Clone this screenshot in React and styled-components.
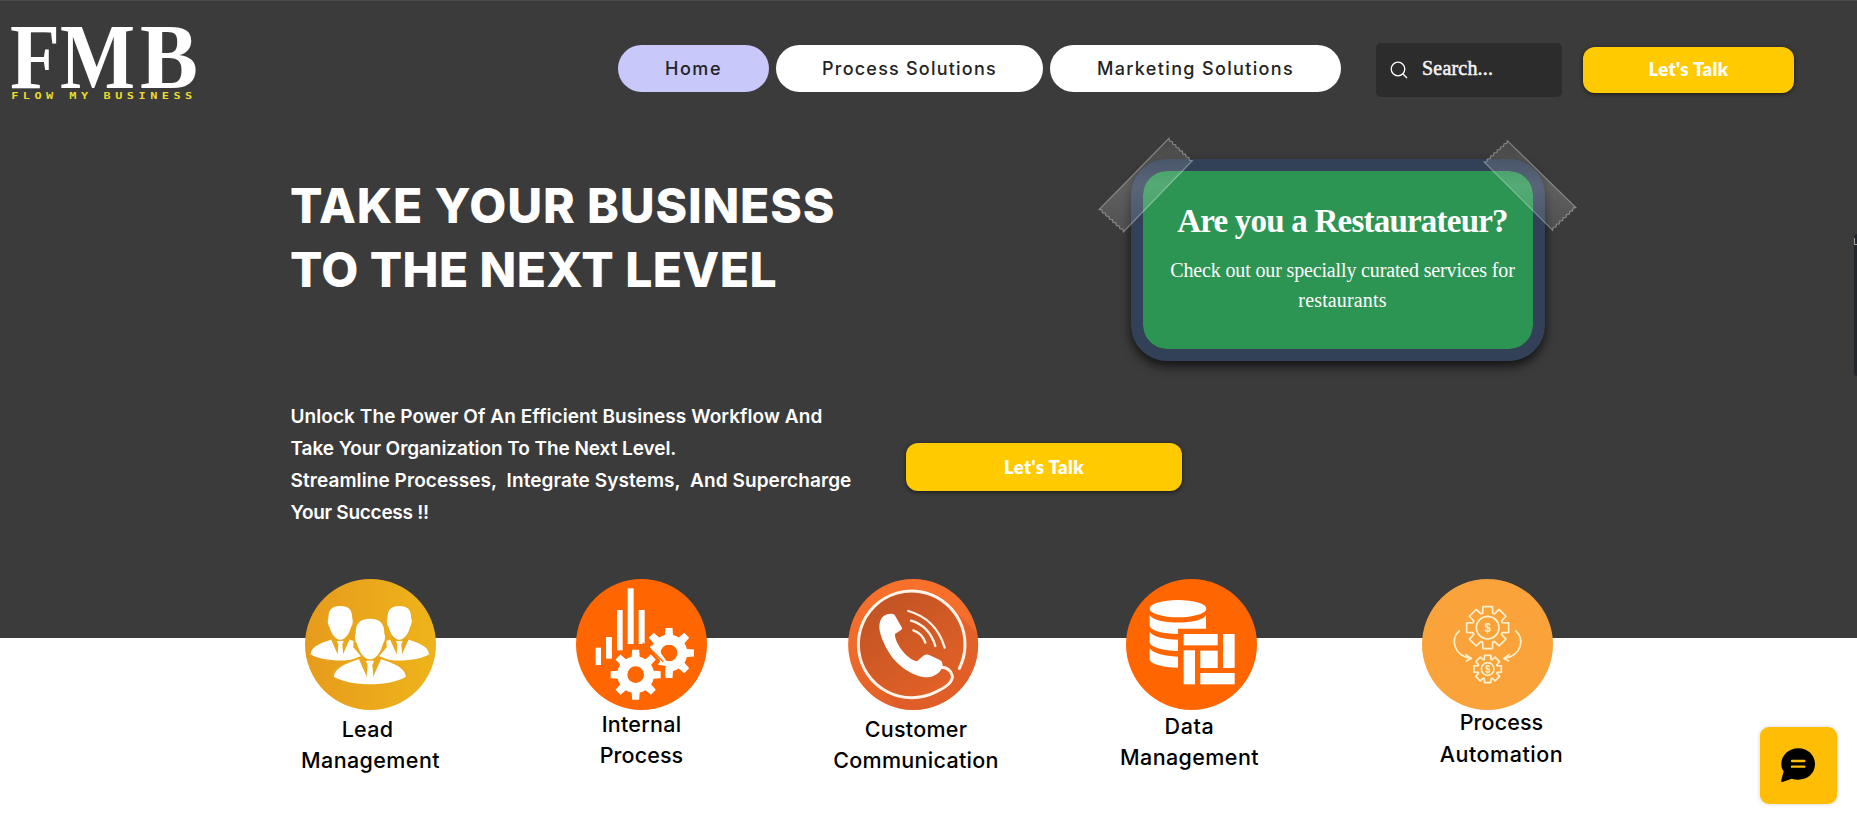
import React from 'react';
import styled, { createGlobalStyle } from 'styled-components';

const GlobalStyle = createGlobalStyle`
  *, *::before, *::after { box-sizing: border-box; }
  body { margin: 0; background: #fff; overflow: hidden; }
  h1, h2, p { margin: 0; }
  button { border: 0; padding: 0; cursor: pointer; }
`;

const Page = styled.div`
  position: relative;
  width: 100%;
  height: 815px;
  overflow: hidden;
  background: #fff;
  font-family: Inter, "Open Sans", sans-serif;
`;

const Hero = styled.section`
  height: 638px;
  background: #3b3b3b;
  border-top: 1px solid #4a4a4a;
`;

const Header = styled.header`
  display: flex;
  align-items: flex-start;
  height: 109px;
`;

const Logo = styled.svg`
  display: block;
  flex: none;
  width: 200px;
  height: 109px;
  overflow: visible;
`;

const Nav = styled.nav`
  display: flex;
  gap: 7px;
  margin: 44px 0 0 418px;
`;

const NavPill = styled.a`
  display: flex;
  align-items: center;
  justify-content: center;
  width: ${(p) => p.$width}px;
  height: 47px;
  border-radius: 24px;
  background: ${(p) => (p.$active ? '#c9c8fa' : '#fff')};
  color: #242323;
  font-size: 18px;
  font-weight: 500;
  letter-spacing: ${(p) => p.$track}px;
  padding-bottom: 1px;
  white-space: nowrap;
`;

const Search = styled.div`
  display: flex;
  align-items: center;
  width: 186px;
  height: 54px;
  margin: 42px 0 0 35px;
  padding-left: 14px;
  border-radius: 5px;
  background: #2c2c2c;
  color: #f4f4f4;
  font: 400 20px "Liberation Serif", serif;
  -webkit-text-stroke: 0.5px #f4f4f4;
  letter-spacing: 0.2px;

  svg { margin: 0 14px 0 0; }
  span { margin-top: -3px; }
`;

const TalkButton = styled.button`
  flex: none;
  width: ${(p) => p.$width}px;
  height: ${(p) => p.$height}px;
  margin: ${(p) => p.$margin};
  padding-bottom: ${(p) => p.$lift || 0}px;
  border-radius: 12px;
  background: #ffcb00;
  box-shadow: 0 1px 4px rgba(0, 0, 0, 0.6);
  color: #fff;
  font: 800 18.5px Lato, sans-serif;
  letter-spacing: 0.4px;
`;

const Intro = styled.div`
  display: flex;
  align-items: flex-start;
  height: 290px;
  padding-left: 290px;
`;

const Heading = styled.h1`
  width: 841px;
  margin-top: 64px;
  color: #fff;
  font-size: 48px;
  font-weight: 800;
  line-height: 64px;
`;

const Line = styled.span`
  display: block;
  white-space: pre;
  letter-spacing: ${(p) => p.$track || 0}px;
`;

const PromoCard = styled.aside`
  position: relative;
  width: 414px;
  height: 202px;
  margin-top: 49px;
  padding: 30px 0 0 9px;
  border: 12px solid #324158;
  border-radius: 36px;
  background: #2d9554;
  background-clip: padding-box;
  box-shadow: 0 5px 11px rgba(0, 0, 0, 0.7);
  color: #fff;
  font-family: "Liberation Serif", serif;
  text-align: center;
`;

const PromoTitle = styled.h2`
  font-size: 33px;
  font-weight: 700;
  line-height: 40px;
`;

const PromoText = styled.p`
  margin-top: 15px;
  font-size: 20px;
  line-height: 29.5px;
`;

const Tapes = styled.svg`
  position: absolute;
  left: -63px;
  top: -51px;
  width: 520px;
  height: 260px;
  pointer-events: none;
`;

const Pitch = styled.div`
  display: flex;
  align-items: flex-start;
  padding-left: 290.5px;
`;

const PitchText = styled.p`
  width: 615.5px;
  margin-top: 1px;
  color: #fff;
  font-size: 19px;
  font-weight: 600;
  line-height: 32px;
`;

const Services = styled.section`
  position: relative;
  display: flex;
  align-items: flex-start;
  margin-top: -59px;
`;

const Service = styled.article`
  display: flex;
  flex: none;
  flex-direction: column;
  align-items: center;
  width: 180px;
  margin-left: ${(p) => p.$gap}px;
`;

const Badge = styled.svg`
  display: block;
  width: 131px;
  height: 131px;
`;

const ServiceName = styled.p`
  margin: ${(p) => p.$top}px 0 0 ${(p) => p.$shift}px;
  color: #000;
  font-size: 21.5px;
  font-weight: 500;
  line-height: ${(p) => p.$leading || 31}px;
  text-align: center;
`;

const ChatButton = styled.button`
  position: absolute;
  right: 20px;
  bottom: 11px;
  width: 77px;
  height: 77px;
  border-radius: 9px;
  background: #ffbd06;
  box-shadow: 0 0 4px rgba(0, 0, 0, 0.18);

  svg { display: block; width: 77px; height: 77px; }
`;

const SideTab = styled.div`
  position: absolute;
  right: 0;
  top: 234px;
  width: 3px;
  height: 142px;
  background: #20272d;
  border-radius: 3px 0 0 3px;

  &::before {
    content: '';
    position: absolute;
    left: 0;
    top: 4px;
    width: 3px;
    height: 7px;
    border: 1px solid #a0a0a0;
    border-width: 0 0 1px 1px;
  }
`;

function gearPath(cx, cy, outer, inner, baseHalf, tipHalf) {
  const pt = (a, along, side) => {
    const x = cx + along * Math.cos(a) - side * Math.sin(a);
    const y = cy + along * Math.sin(a) + side * Math.cos(a);
    return `${x.toFixed(1)} ${y.toFixed(1)}`;
  };
  const base = Math.sqrt(inner * inner - baseHalf * baseHalf);
  let d = '';
  for (let i = 0; i < 8; i += 1) {
    const a = (i * Math.PI) / 4;
    d += i === 0 ? `M${pt(a, base, -baseHalf)}` : `A${inner} ${inner} 0 0 1 ${pt(a, base, -baseHalf)}`;
    d += `L${pt(a, outer, -tipHalf)}L${pt(a, outer, tipHalf)}L${pt(a, base, baseHalf)}`;
  }
  return `${d}A${inner} ${inner} 0 0 1 ${pt(0, base, -baseHalf)}Z`;
}

const Person = ({ x, y, s }) => (
  <g transform={`translate(${x} ${y}) scale(${s})`}>
    <path d="M-30 60 C-62 72 -104 82 -108 114 C-60 144 60 144 108 114 C104 82 62 72 30 60Z" fill="#fff" />
    <path d="M-36 55 L-9 116 L-5 76 L-12 68 L12 68 L5 76 L9 116 L36 55Z" fill="#eba81c" />
    <path d="M-12 68 Q0 61 12 68 L7 79 L10 116 L0 133 L-10 116 L-7 79Z" fill="#fff" />
    <path
      d="M0 -60 C31 -60 43 -46 43 -15 C47 -10 45 9 39 15 C32 42 17 62 0 62 C-17 62 -32 42 -39 15 C-45 9 -47 -10 -43 -15 C-43 -46 -31 -60 0 -60Z"
      fill="#fff"
      stroke="#eba81c"
      strokeWidth="7"
      paintOrder="stroke"
    />
  </g>
);

const LeadIcon = () => (
  <Badge viewBox="105 57 393 393">
    <defs>
      <linearGradient id="lead">
        <stop offset="0" stopColor="#e79b1d" />
        <stop offset="1" stopColor="#eeb41a" />
      </linearGradient>
    </defs>
    <circle cx="301.500" cy="253.500" r="196.500" fill="url(#lead)" />
    <Person x={211} y={188} s={0.83} />
    <Person x={388} y={188} s={0.83} />
    <path d="M252 200 Q300 155 348 200 L350 262 L320 297 H280 L250 262Z" fill="#eba81c" />
    <path d="M186 350 C186 314 232 306 274 288 H326 C368 306 414 314 414 350 L404 358 L196 358Z" fill="#eba81c" />
    <Person x={300} y={236} s={1} />
  </Badge>
);

const ProcessIcon = () => (
  <Badge viewBox="918 57 393 393">
    <circle cx="1114.500" cy="253.500" r="196.500" fill="#ff6600" />
    <g fill="#fff">
      <rect x="977" y="263" width="16" height="52" />
      <rect x="1008" y="231" width="18" height="65" />
      <rect x="1041" y="150" width="17" height="121" />
      <rect x="1073" y="85" width="18" height="167" />
      <rect x="1106" y="150" width="18" height="102" />
      <path d={gearPath(1197, 279, 75, 55, 12, 10.5)} />
    </g>
    <circle cx="1197" cy="279" r="25" fill="#ff6600" />
    <path d="M1118 246 L1140 266 L1172 303 L1164 314 L1187 317 L1185 345 L1120 345Z" fill="#ff6600" />
    <path d="M1143 256 L1140 263 L1175 298 L1165 312 L1188 317 L1190 304 L1166 270Z" fill="#fff" />
    <path d="M1138 264 L1180 305" stroke="#ff6600" strokeWidth="4" />
    <path d={gearPath(1097, 344, 75, 55, 12, 10.5)} fill="#fff" stroke="#ff6600" strokeWidth="8" paintOrder="stroke" />
    <circle cx="1097" cy="344" r="25" fill="#ff6600" />
  </Badge>
);

const PhoneIcon = () => (
  <Badge viewBox="114 57 393 393">
    <defs>
      <linearGradient id="rim" x1="0" y1="0" x2="0" y2="1">
        <stop offset="0" stopColor="#f8712c" />
        <stop offset="0.5" stopColor="#f06b2b" />
        <stop offset="1" stopColor="#e25f28" />
      </linearGradient>
      <linearGradient id="disc" x1="0" y1="0" x2="0.7" y2="1">
        <stop offset="0" stopColor="#bd5124" />
        <stop offset="1" stopColor="#e26126" />
      </linearGradient>
      <clipPath id="round"><ellipse cx="309.500" cy="253.500" rx="195" ry="196.500" /></clipPath>
    </defs>
    <ellipse cx="309.500" cy="253.500" rx="195" ry="196.500" fill="url(#rim)" />
    <path d="M420 138 L540 258 L540 500 L310 500 L195 365Z" fill="#dd5c26" opacity="0.65" clipPath="url(#round)" />
    <circle cx="308" cy="252" r="160" fill="url(#disc)" />
    <g fill="none" stroke="#fff4ea" strokeLinecap="round">
      <path d="M448 325 A160 160 0 1 0 375 397 C408 382 429 366 427 348 C423 331 410 322 392 322" strokeWidth="9" />
      <path d="M295 153 Q379 177 404 263" strokeWidth="7" />
      <path d="M303 182 Q358 198 376 258" strokeWidth="7" />
      <path d="M310 211 Q336 219 346 248" strokeWidth="7" />
    </g>
    <path
      d="M221 168 Q233 160 249 162 Q254 163 257 170 L276 203 Q277 208 272 211 L255 222 C253 248 291 299 321 304 L340 287 Q349 281 358 285 L391 301 Q399 306 398 315 C395 337 374 350 353 352 C315 354 265 319 242 286 C220 252 207 218 208 198 Q209 178 221 168Z"
      fill="#fff"
    />
  </Badge>
);

const DataIcon = () => (
  <Badge viewBox="948 57 393 393">
    <circle cx="1144.500" cy="253.500" r="196.500" fill="#ff6600" />
    <g fill="#fff">
      <ellipse cx="1104" cy="146" rx="85" ry="26" />
      <path d="M1019 165 C1032 195 1176 195 1188 165 V206 H1104 V222 C1060 221 1024 213 1019 198Z" />
      <path d="M1019 215 C1028 229 1060 238 1104 239 V273 C1060 271 1024 262 1019 248Z" />
      <path d="M1019 265 C1028 279 1060 289 1104 290 V323 C1060 321 1024 313 1019 299Z" />
      <rect x="1121" y="222" width="102" height="34" />
      <rect x="1239" y="222" width="35" height="102" />
      <rect x="1121" y="271" width="34" height="102" />
      <rect x="1171" y="272" width="52" height="52" />
      <rect x="1171" y="339" width="103" height="34" />
    </g>
  </Badge>
);

const AutomationIcon = () => (
  <Badge viewBox="96 57 393 393">
    <circle cx="292.500" cy="253.500" r="196.500" fill="#faa33a" />
    <g fill="none" stroke="#fff0cf" strokeWidth="5" strokeLinejoin="round">
      <path d={gearPath(293, 203, 63, 46, 15, 14.5)} />
      <circle cx="293" cy="203" r="34" />
      <path d={gearPath(293, 327, 41, 30, 10, 9.5)} />
      <circle cx="293" cy="327" r="19" />
      <path d="M209 211 C179 239 192 286 242 295 M226 283 L244 295 L228 304" />
      <path d="M376 211 C406 239 394 286 343 295 M359 283 L341 295 L357 304" />
    </g>
    <g fill="#fff0cf" fontFamily="Liberation Sans, sans-serif" textAnchor="middle">
      <text x="293" y="217" fontSize="40" fontWeight="700" textLength="19" lengthAdjust="spacingAndGlyphs">$</text>
      <text x="293" y="338" fontSize="30" fontWeight="700" textLength="15" lengthAdjust="spacingAndGlyphs">$</text>
    </g>
  </Badge>
);

const services = [
  { id: 'lead', Icon: LeadIcon, gap: 280.5, top: 4, shift: 0, lines: [['Lead ', 0.3], ['Management', 0.4]] },
  { id: 'internal', Icon: ProcessIcon, gap: 91, top: -1, shift: 0, lines: [['Internal', 0.25], ['Process', 0.1]] },
  { id: 'customer', Icon: PhoneIcon, gap: 91.5, top: 4, shift: 6, lines: [['Customer', 0.25], ['Communication', 0.3]] },
  { id: 'data', Icon: DataIcon, gap: 98.5, top: 1, shift: -4, lines: [['Data', 0.6], ['Management', 0.4]] },
  { id: 'auto', Icon: AutomationIcon, gap: 116, top: -4, shift: 28, leading: 32, lines: [['Process', 0.1], ['Automation', 0.55]] },
];

const teeth = (x1, y1, x2, y2, n) => {
  const pts = [];
  const len = Math.hypot(x2 - x1, y2 - y1);
  const nx = -(y2 - y1) / len;
  const ny = (x2 - x1) / len;
  for (let i = 0; i <= n; i += 1) {
    const k = i % 2 ? 5 : 0;
    pts.push(`${(x1 + ((x2 - x1) * i) / n + nx * k).toFixed(1)},${(y1 + ((y2 - y1) * i) / n + ny * k).toFixed(1)}`);
  }
  return pts.join(' ');
};

export default function App() {
  return (
    <>
      <GlobalStyle />
      <Page>
        <Hero>
          <Header>
            <Logo viewBox="0 1 200 109" aria-label="FMB Flow My Business">
              <g fill="#fff" fontFamily="Liberation Serif, serif" fontWeight="700" fontSize="94">
                <text x="10" y="88" textLength="50" lengthAdjust="spacingAndGlyphs">F</text>
                <text x="60" y="88" textLength="75" lengthAdjust="spacingAndGlyphs">M</text>
                <text x="140" y="88" textLength="58" lengthAdjust="spacingAndGlyphs">B</text>
              </g>
              <g fill="#e9dc2e" fontFamily="DejaVu Sans Mono, monospace" fontWeight="700" fontSize="8.5" transform="scale(1.4 1)">
                <text x="8" y="99" letterSpacing="3.200">FLOW</text>
                <text x="49.500" y="99" letterSpacing="3.200">MY</text>
                <text x="74" y="99" letterSpacing="3.200">BUSINESS</text>
              </g>
            </Logo>
            <Nav>
              <NavPill $width={151} $active $track={1.6}>Home</NavPill>
              <NavPill $width={267} $track={1.22}>Process Solutions</NavPill>
              <NavPill $width={291} $track={1.35}>Marketing Solutions</NavPill>
            </Nav>
            <Search>
              <svg width="18" height="18" viewBox="0 0 18 18" fill="none" stroke="#fff" strokeWidth="1.3">
                <circle cx="8" cy="8" r="6.800" />
                <path d="M12.800 12.800 L17 17" />
              </svg>
              <span>Search...</span>
            </Search>
            <TalkButton $width={211} $height={46} $lift={2} $margin="46px 0 0 21px">Let's Talk</TalkButton>
          </Header>
          <Intro>
            <Heading>
              <Line $track={0.85}>TAKE YOUR BUSINESS</Line>
              <Line $track={0.4}>TO THE NEXT LEVEL</Line>
            </Heading>
            <PromoCard>
              <PromoTitle><Line $track={-0.78}>Are you a Restaurateur?</Line></PromoTitle>
              <PromoText>
                <Line $track={-0.15}>Check out our specially curated services for</Line>
                <Line $track={0.15}>restaurants</Line>
              </PromoText>
              <Tapes viewBox="0 0 1560 780">
                <defs>
                  <linearGradient id="tape" x1="0" y1="0" x2="0" y2="1">
                    <stop offset="0" stopColor="#fff" stopOpacity="0.06" />
                    <stop offset="0.5" stopColor="#fff" stopOpacity="0.19" />
                    <stop offset="1" stopColor="#fff" stopOpacity="0.11" />
                  </linearGradient>
                </defs>
                <g fill="url(#tape)" stroke="#fff" strokeOpacity="0.34" strokeWidth="3.500">
                  <polygon points={`${teeth(267, 55, 337, 122, 14)} ${teeth(130, 336, 57, 269, 14)}`} />
                  <polygon points={`${teeth(1212, 126, 1282, 62, 14)} ${teeth(1488, 263, 1418, 331, 14)}`} />
                </g>
              </Tapes>
            </PromoCard>
          </Intro>
          <Pitch>
            <PitchText>
              <Line $track={0.07}>Unlock The Power Of An Efficient Business Workflow And</Line>
              <Line $track={-0.06}>Take Your Organization To The Next Level.</Line>
              <Line $track={0.08}>Streamline Processes,  Integrate Systems,  And Supercharge</Line>
              <Line $track={-0.27}>Your Success !!</Line>
            </PitchText>
            <TalkButton $width={276} $height={48} $margin="43px 0 0">Let's Talk</TalkButton>
          </Pitch>
        </Hero>
        <Services>
          {services.map(({ id, Icon, gap, top, shift, leading, lines }) => (
            <Service key={id} $gap={gap}>
              <Icon />
              <ServiceName $top={top} $shift={shift} $leading={leading}>
                {lines.map(([text, track]) => <Line key={text} $track={track}>{text}</Line>)}
              </ServiceName>
            </Service>
          ))}
        </Services>
        <SideTab />
        <ChatButton aria-label="Chat">
          <svg viewBox="1110 501 231 231">
            <path d="M1225 565 C1254 565 1275 586 1275 612 C1275 640 1253 659 1225 659 C1218 659 1211 658 1205 656 L1178 666 Q1172 667 1174 660 L1181 634 C1176 628 1174 620 1174 612 C1174 586 1196 565 1225 565Z" fill="#000" />
            <path d="M1206 603 H1243 M1206 620 H1243" stroke="#ffbd06" strokeWidth="7" strokeLinecap="round" />
          </svg>
        </ChatButton>
      </Page>
    </>
  );
}
